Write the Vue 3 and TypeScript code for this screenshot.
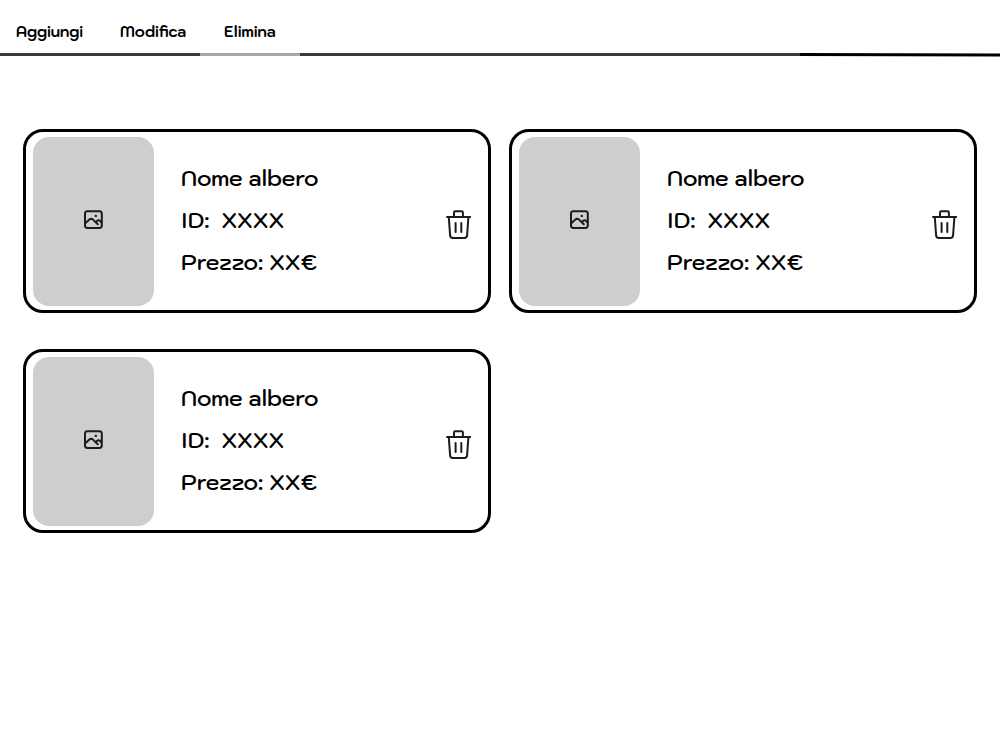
<script setup lang="ts">
import { ref } from 'vue'

interface Tree {
  key: number
  name: string
  code: string
  price: string
}

const sections: string[] = ['Aggiungi', 'Modifica', 'Elimina']

const trees = ref<Tree[]>([
  { key: 1, name: 'Nome albero', code: 'XXXX', price: 'XX€' },
  { key: 2, name: 'Nome albero', code: 'XXXX', price: 'XX€' },
  { key: 3, name: 'Nome albero', code: 'XXXX', price: 'XX€' },
])

function removeTree(key: number): void {
  trees.value = trees.value.filter((tree) => tree.key !== key)
}
</script>

<template>
  <div class="page">
    <header>
      <nav class="menu">
        <a v-for="section in sections" :key="section" href="#" class="menu-link">{{ section }}</a>
      </nav>
      <div class="rule" aria-hidden="true">
        <span class="dark short"></span>
        <span class="light"></span>
        <span class="dark long"></span>
        <svg class="tail" viewBox="0 0 200 4" preserveAspectRatio="none">
          <path d="M0 0L200 .6V3.6L0 3z" fill="#000" />
        </svg>
      </div>
    </header>

    <main class="grid">
      <article v-for="tree in trees" :key="tree.key" class="card">
        <div class="picture">
          <svg width="21" height="20" viewBox="0 0 21 20" fill="none" stroke="#1b1c1e" stroke-width="2" stroke-linecap="round" stroke-linejoin="round">
            <rect x="2" y="1.3" width="16.8" height="16.6" rx="2.4" />
            <path d="M2.6 13.1L6.4 9.6Q8.2 8 10 9.6L14.8 14.2" />
            <path d="M12.8 12.1L14.2 10.7Q15.5 9.6 16.8 10.8L18.4 12.4" />
            <circle cx="12.8" cy="5.9" r="1.2" fill="#1b1c1e" stroke="none" />
          </svg>
        </div>
        <div class="details">
          <span>{{ tree.name }}</span>
          <span>ID:&nbsp; {{ tree.code }}</span>
          <span>Prezzo: {{ tree.price }}</span>
        </div>
        <button type="button" class="remove" :aria-label="'Elimina ' + tree.name" @click="removeTree(tree.key)">
          <svg width="26" height="30" viewBox="0 0 26 30" fill="none" stroke="#1b1c1e" stroke-width="2" stroke-linecap="round" stroke-linejoin="round">
            <path d="M1 6.9H24.2" />
            <path d="M8 6.5V2.5Q8 1.2 9.3 1.2H15.6Q16.9 1.2 16.9 2.5V6.5" />
            <path d="M2.8 7.2L4.1 25.4Q4.3 27.9 6.8 27.9H18.4Q20.9 27.9 21.1 25.4L22.4 7.2" />
            <path d="M9.6 12.9V21.9M15.3 12.9V21.9" />
          </svg>
        </button>
      </article>
    </main>
  </div>
</template>

<style>
body {
  margin: 0;
  background: #fff;
}
</style>

<style scoped>
.page {
  color: #000;
  font-family: Kodchasan, Inter, "Liberation Sans", sans-serif;
  font-weight: 600;
}

.menu {
  display: flex;
  padding: 22px 16px 11px;
}

.menu-link {
  width: 104px;
  color: #000;
  font-size: 15px;
  font-weight: 700;
  line-height: 20px;
  text-decoration: none;
}

.rule {
  display: flex;
  height: 4px;
}

.rule span {
  height: 3px;
}

.dark {
  background: #373837;
}

.light {
  width: 10%;
  background: #a8a8a8;
}

.short {
  width: 20%;
}

.long {
  width: 50%;
}

.tail {
  width: 20%;
  height: 4px;
}

.grid {
  display: grid;
  grid-template-columns: 1fr 1fr;
  gap: 36px 18px;
  padding: 72px 23px 36px;
}

.card {
  display: flex;
  align-items: center;
  padding: 5px 16px 4px 7px;
  border: 3px solid #000;
  border-radius: 20px;
}

.picture {
  box-sizing: border-box;
  display: flex;
  align-items: center;
  justify-content: center;
  width: 121px;
  height: 169px;
  padding-bottom: 4px;
  border-radius: 16px;
  background: #cdced0;
}

.details {
  display: flex;
  flex: 1;
  flex-direction: column;
  margin-left: 27px;
  padding-bottom: 4px;
  font-size: 22px;
  line-height: 42px;
}

.remove {
  padding: 6px 0 0;
  border: 0;
  background: none;
  cursor: pointer;
}

.remove svg {
  display: block;
}
</style>
